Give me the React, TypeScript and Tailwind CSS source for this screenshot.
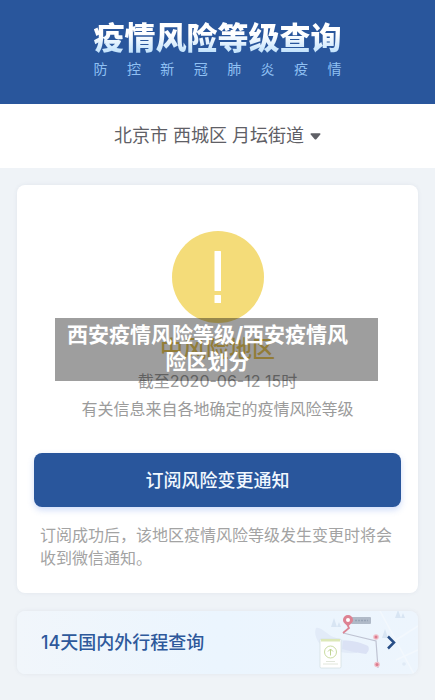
import { useState } from "react";

const SUBTITLE = ["防", "控", "新", "冠", "肺", "炎", "疫", "情"];
const AREAS = ["北京市 西城区 月坛街道"];

function AreaPicker() {
  const [area, setArea] = useState(AREAS[0]);
  return (
    <div className="flex h-16 items-center justify-center gap-1.5 bg-white text-[#5f6066]">
      <select
        aria-label="选择地区"
        value={area}
        onChange={(e) => setArea(e.target.value)}
        className="h-8 cursor-pointer appearance-none bg-transparent text-[18px] leading-8 [field-sizing:content]"
      >
        {AREAS.map((name) => (
          <option key={name}>{name}</option>
        ))}
      </select>
      <svg width="11" height="7" viewBox="0 0 11 7" fill="currentColor" aria-hidden="true">
        <path d="M1.2 0.3h8.6c.7 0 1 .8.5 1.3L6.300 6.200c-.4.5-1.200.5-1.600 0L.7 1.600C.2 1.100.5.3 1.200.3z" />
      </svg>
    </div>
  );
}

function WarningIcon() {
  return (
    <svg width="92" height="92" viewBox="0 0 92 92" aria-hidden="true">
      <circle cx="46" cy="46" r="46" fill="#f4dc79" />
      <rect x="42.5" y="20" width="6.5" height="40" rx="0.5" fill="#fff" />
      <rect x="42.5" y="64" width="6.5" height="8" rx="0.5" fill="#fff" />
    </svg>
  );
}

function RouteDrawing() {
  return (
    <svg width="104" height="63" viewBox="314 611 104 63" aria-hidden="true">
      {/* faint map shapes */}
      <path d="M316 628c4-1 9 4 15 8 8 4 18 4 26 7v10c-14 1-30-3-38-10-3-5-5-10-3-15z" fill="#e2ebf8" />
      <path d="M343 641c5-1 16 0 25 5 2 3 0 6-2 8-8-1-17-3-24-5z" fill="#dbe2f5" />
      <path
        d="M331 627l3-9 3 9zM337 627l2-5 2 5zM395 618l3-8 3 8zM401 618l2-5 2 5zM382 638l3-9 3 9z"
        fill="#d8e5f3"
      />
      <path d="M396 640l22-14M396 660l22-10M380 611l34 63" stroke="#f3f8fd" strokeWidth="1.5" />
      <circle cx="404" cy="664" r="1.8" fill="#e0eaf6" />
      {/* route */}
      <path d="M343 633L376 641L378 668" fill="none" stroke="#bfc3d2" strokeWidth="1.2" />
      <path d="M348 626l1 2-6 5" fill="none" stroke="#dc8494" strokeWidth="1.7" />
      <rect x="351" y="617" width="20" height="7" rx="1" fill="#b0bac8" />
      <path d="M355 620.5h13" stroke="#97a3b5" strokeWidth="1.5" strokeDasharray="2 1" />
      <path d="M348 615a5 5 0 0 1 5 5c0 3-3 4-5 7-2-3-5-4-5-7a5 5 0 0 1 5-5z" fill="#dd8293" />
      <circle cx="348" cy="620" r="2" fill="#fff" />
      <circle cx="376" cy="637" r="2.8" fill="#f0bfc9" />
      <circle cx="376" cy="637" r="1.5" fill="#dc7b8e" />
      <circle cx="377" cy="664.5" r="2.8" fill="#f0bfc9" />
      <circle cx="377" cy="664.5" r="1.5" fill="#dc7b8e" />
      {/* permit card */}
      <rect x="320" y="639" width="21" height="29" rx="1.5" fill="#fff" stroke="#d6e1e2" strokeWidth="0.8" />
      <path d="M321 639h19v2.500h-19z" fill="#dce8b8" />
      <circle cx="330.500" cy="652" r="6" fill="none" stroke="#cadca2" />
      <path d="M330.500 655.500v-6.500M328 651.500l2.500-2.500 2.500 2.500" fill="none" stroke="#bfd491" />
      <path d="M326 661.500h9M323 664h15" stroke="#d9e0d2" strokeWidth="0.8" />
    </svg>
  );
}

export default function App() {
  return (
    <div className="min-h-screen bg-[#eff3f7] font-['Inter','Noto_Sans_CJK_SC',sans-serif]">
      <header className="flex h-[104px] flex-col items-center bg-[#29569c] pt-[20px]">
        <div>
          <h1 className="bg-linear-to-b from-white from-40% to-[#b5dcfb] bg-clip-text text-[31px] font-black leading-[36px] text-transparent">
            疫情风险等级查询
          </h1>
          <p className="mt-1 flex justify-between text-[14px] leading-[18px] text-[#8fc0f3]">
            {SUBTITLE.map((char) => (
              <span key={char}>{char}</span>
            ))}
          </p>
        </div>
      </header>

      <AreaPicker />

      <main className="flex flex-col gap-[18px] px-[17px] pt-[17px] pb-6">
        <section className="relative rounded-lg bg-white px-[17px] pt-[46px] pb-[23px] shadow-[0_0_4px_rgba(60,80,110,0.08)]">
          <div className="flex flex-col items-center text-center text-[16px] text-[#9b9b9b]">
            <WarningIcon />
            <h2 className="mt-3 text-[23px] font-medium leading-[28px] text-[#ecc95a]">中风险地区</h2>
            <p className="mt-1 leading-[28px]">截至2020-06-12 15时</p>
            <p className="leading-[28px]">有关信息来自各地确定的疫情风险等级</p>
          </div>
          <button
            type="button"
            className="mt-[30px] h-[54px] w-full cursor-pointer rounded-lg bg-[#29569c] text-[18px] font-medium text-[#f1f8ff] shadow-[0_3px_6px_rgba(70,120,230,0.25)]"
          >
            订阅风险变更通知
          </button>
          <p className="mt-[17px] px-1.5 text-[16px] leading-[23px] text-[#a3a3a3]">
            订阅成功后，该地区疫情风险等级发生变更时将会收到微信通知。
          </p>

          <div className="absolute top-[133px] right-[40px] left-[38px] bg-black/38 pt-[3px] pr-7 pb-[6px] pl-[10px] text-center text-[21px] font-bold leading-[27px] text-white">
            西安疫情风险等级/西安疫情风险区划分
          </div>
        </section>

        <a
          href="#trips"
          className="flex h-[63px] items-center justify-between overflow-hidden rounded-lg bg-linear-to-r from-[#f1f6fb] via-[#ebf5fe] to-[#edf5fd] pl-6 shadow-[0_0_4px_rgba(60,80,110,0.08)]"
        >
          <span className="text-[18px] font-medium text-[#2e599b]">14天国内外行程查询</span>
          <span className="relative">
            <RouteDrawing />
            <svg
              className="absolute top-6 right-[22px]"
              width="10"
              height="15"
              viewBox="0 0 10 15"
              fill="none"
              stroke="#284e86"
              strokeWidth="2.5"
              aria-hidden="true"
            >
              <path d="M2 1.500L8 7.500l-6 6" />
            </svg>
          </span>
        </a>
      </main>
    </div>
  );
}
